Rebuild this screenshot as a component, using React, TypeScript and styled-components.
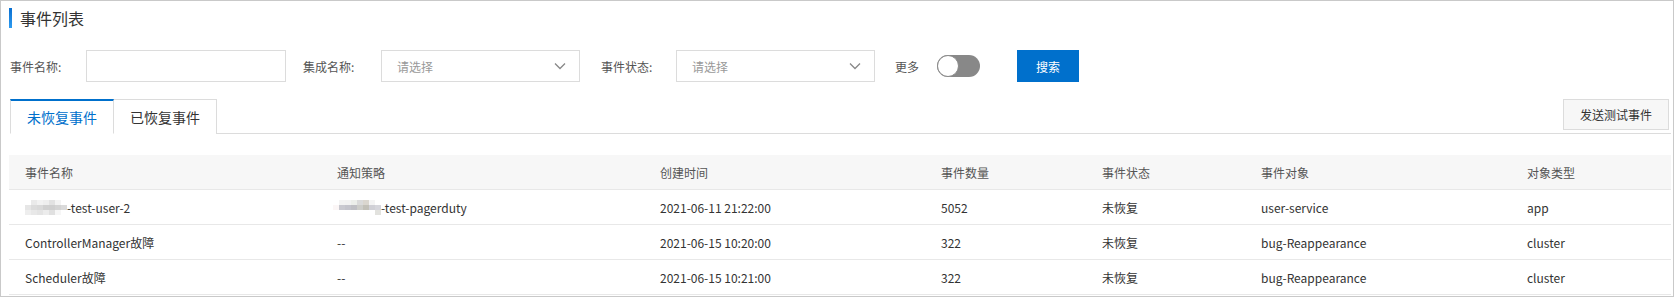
import React, { useState } from 'react';
import styled, { createGlobalStyle } from 'styled-components';

const GlobalStyle = createGlobalStyle`
    body{
        margin:0;
        background:#fff;
        font-family:"Noto Sans CJK SC","Liberation Sans",sans-serif;
        color:#333;
    }
    *{ box-sizing:border-box; }
`;

const Page = styled.div`
    width:1674px;
    height:297px;
    border:1px solid #c9c9c9;
    padding:0 2px 0 8px;
    overflow:hidden;
`;

const Title = styled.div`
    display:flex;
    align-items:center;
    height:20px;
    margin-top:7px;
    span{
        font-size:16px;
        color:#333;
        margin-left:8px;
    }
    &::before{
        content:'';
        display:block;
        width:3px;
        height:20px;
        background:linear-gradient(#0a6fd0,#2d9bf0);
    }
`;

const FilterRow = styled.div`
    display:flex;
    align-items:center;
    height:32px;
    margin-top:22px;
`;

const Label = styled.label<{ $w: number; $ml?: number }>`
    width:${p => p.$w}px;
    margin-left:${p => p.$ml || 0}px;
    font-size:12px;
    color:#555;
    flex-shrink:0;
`;

const Input = styled.input`
    width:200px;
    height:32px;
    border:1px solid #dcdcdc;
    outline:none;
    padding:0 10px;
    font-size:12px;
`;

const Select = styled.div`
    width:199px;
    height:32px;
    border:1px solid #dcdcdc;
    display:flex;
    align-items:center;
    justify-content:space-between;
    padding:0 12px 0 15px;
    font-size:12px;
    color:#999;
`;

const Toggle = styled.div<{ $on: boolean }>`
    width:43px;
    height:22px;
    border-radius:11px;
    background:${p => p.$on ? '#0070cc' : '#888'};
    margin-left:18px;
    position:relative;
    cursor:pointer;
    &::after{
        content:'';
        position:absolute;
        top:0;
        left:${p => p.$on ? '21px' : '0'};
        width:22px;
        height:22px;
        border-radius:50%;
        background:#fff;
        border:1px solid #8a8a8a;
        box-sizing:border-box;
    }
`;

const SearchButton = styled.button`
    margin-left:37px;
    width:62px;
    height:32px;
    border:none;
    background:#0070cc;
    color:#fff;
    font-size:12px;
    font-family:inherit;
    cursor:pointer;
`;

const TabBar = styled.div`
    display:flex;
    align-items:flex-end;
    margin-top:17px;
    height:35px;
    border-bottom:1px solid #dcdcdc;
    margin-left:1px;
`;

const Tab = styled.div<{ $active?: boolean }>`
    height:35px;
    padding:0 16px;
    display:flex;
    align-items:center;
    font-size:14px;
    color:${p => p.$active ? '#0070cc' : '#333'};
    background:#fff;
    border:1px solid #dcdcdc;
    border-top:${p => p.$active ? '2px solid #0070cc' : '1px solid #dcdcdc'};
    border-bottom:${p => p.$active ? '1px solid #fff' : 'none'};
    margin-bottom:-1px;
    & + &{ border-left:none; }
    cursor:pointer;
`;

const TestButton = styled.button`
    margin-left:auto;
    align-self:flex-start;
    width:106px;
    height:31px;
    border:1px solid #dcdcdc;
    background:#f7f7f7;
    font-size:12px;
    color:#333;
    font-family:inherit;
    margin-right:2px;
`;

const cols = '312px 323px 281px 161px 159px 266px 160px';

const Table = styled.div`
    margin-top:21px;
    width:1662px;
`;

const Row = styled.div<{ $head?: boolean }>`
    display:grid;
    grid-template-columns:${cols};
    height:35px;
    align-items:center;
    font-size:12px;
    background:${p => p.$head ? '#f7f7f7' : '#fff'};
    color:${p => p.$head ? '#555' : '#333'};
    border-bottom:1px solid #e8e8e8;
`;

const Cell = styled.div<{ $shift?: number }>`
    padding-left:${p => 16 - (p.$shift || 0)}px;
    display:flex;
    align-items:center;
    white-space:nowrap;
`;

const Mosaic = styled.span`
    display:inline-grid;
    grid-auto-flow:column;
    grid-template-rows:repeat(3,5px);
    grid-auto-columns:6px;
    i{ display:block; }
`;

function Blur({ shades }: { shades: string[] }) {
    return (
        <Mosaic>
            {shades.map((c, i) => <i key={i} style={{ background: c }} />)}
        </Mosaic>
    );
}

const shadesA = ['#fff', '#e6e6e6', '#eee', '#eaeaea', '#dcdcdc', '#e8e8e8', '#f2f2f2', '#d9d9d9', '#e4e4e4', '#eee', '#d0d0d0', '#ececec', '#e2e2e2', '#cfcfcf', '#e0e0e0', '#f3f3f3', '#d4d4d4', '#f6f6f6', '#fff', '#dadada', '#fff'];
const shadesB = ['#fff', '#fbf6f6', '#fff', '#f3f3f3', '#c9c9d0', '#fff', '#f2f2f2', '#c4c4cc', '#fff', '#eceeea', '#bfbfc4', '#fff', '#dadada', '#cdcdc9', '#fff', '#dad6cf', '#c2c0b8', '#fff', '#f4f4f4', '#d0d0d6', '#fff', '#fff', '#d6d6dc', '#e2e2de'];

const rows = [
    [<><Blur shades={shadesA} />-test-user-2</>, <><Blur shades={shadesB} />-test-pagerduty</>, '2021-06-11 21:22:00', '5052', '未恢复', 'user-service', 'app'],
    ['ControllerManager故障', '--', '2021-06-15 10:20:00', '322', '未恢复', 'bug-Reappearance', 'cluster'],
    ['Scheduler故障', '--', '2021-06-15 10:21:00', '322', '未恢复', 'bug-Reappearance', 'cluster'],
];

const heads = ['事件名称', '通知策略', '创建时间', '事件数量', '事件状态', '事件对象', '对象类型'];

function Chevron() {
    return (
        <svg width="14" height="14" viewBox="0 0 14 14">
            <path d="M2 4.5 L7 9.5 L12 4.5" fill="none" stroke="#888" strokeWidth="1.3" />
        </svg>
    );
}

export default function App() {
    const [more, setMore] = useState(false);
    const [tab, setTab] = useState(0);

    return (
        <Page>
            <GlobalStyle />
            <Title><span>事件列表</span></Title>
            <FilterRow>
                <Label $w={76} $ml={1}>事件名称:</Label>
                <Input />
                <Label $w={78} $ml={17}>集成名称:</Label>
                <Select>请选择<Chevron /></Select>
                <Label $w={75} $ml={21}>事件状态:</Label>
                <Select>请选择<Chevron /></Select>
                <Label $w={24} $ml={20}>更多</Label>
                <Toggle $on={more} onClick={() => setMore(!more)} />
                <SearchButton>搜索</SearchButton>
            </FilterRow>
            <TabBar>
                <Tab $active={tab === 0} onClick={() => setTab(0)}>未恢复事件</Tab>
                <Tab $active={tab === 1} onClick={() => setTab(1)}>已恢复事件</Tab>
                <TestButton>发送测试事件</TestButton>
            </TabBar>
            <Table>
                <Row $head>
                    {heads.map(h => <Cell key={h}>{h}</Cell>)}
                </Row>
                {rows.map((r, i) => (
                    <Row key={i}>
                        {r.map((c, j) => <Cell key={j} $shift={i === 0 && j === 1 ? 4 : 0}>{c}</Cell>)}
                    </Row>
                ))}
            </Table>
        </Page>
    );
}
